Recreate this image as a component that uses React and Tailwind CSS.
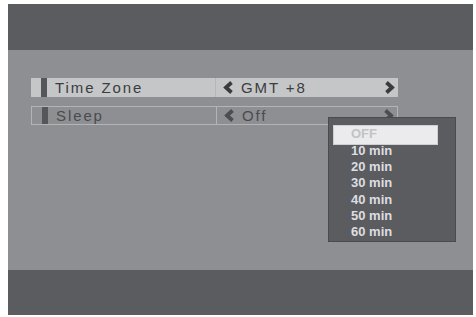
import React from "react";

// chevrons drawn as thick angle strokes, like the OSD arrows
const Chevron = ({ dir = "left", color = "#3a3b3d" }) => (
  <svg width="10" height="13" viewBox="0 0 10 13" className="shrink-0">
    <polyline
      points={dir === "left" ? "8.5,1.5 3,6.5 8.5,11.5" : "1.5,1.5 7,6.5 1.5,11.5"}
      fill="none"
      stroke={color}
      strokeWidth="3.8"
      strokeLinejoin="miter"
    />
  </svg>
);

const SLEEP_OPTIONS = ["10 min", "20 min", "30 min", "40 min", "50 min", "60 min"];

const SettingRow = ({ label, value, active }) => {
  const text = active ? "text-[#3c3d3f]" : "text-[#4a4b4e]";
  const chev = active ? "#3a3b3d" : "#4c4d50";
  return (
    <div
      className={`flex h-[19px] w-[367px] items-center ${
        active ? "bg-[#c5c6c8]" : "border border-[#b3b4b6] bg-[#8e8f92]"
      }`}
    >
      <div className="ml-[10px] h-full w-[6px] bg-[#55565a]" />
      <div className={`ml-[8px] w-[160px] text-[15px] leading-none tracking-[1.9px] ${text}`}>
        {label}
      </div>
      <div
        className={`flex h-full flex-1 items-center border-l ${
          active ? "border-[#b6b7b9]" : "border-[#b3b4b6]"
        } pl-[7px] pr-[3px]`}
      >
        <Chevron dir="left" color={chev} />
        <span className={`ml-[8px] flex-1 text-[15px] leading-none tracking-[1.9px] ${text}`}>
          {value}
        </span>
        <Chevron dir="right" color={chev} />
      </div>
    </div>
  );
};

export default function App() {
  return (
    <div
      className="relative h-[317px] w-[476px] bg-white pl-[8px] pt-[4px]"
      style={{ fontFamily: '"Liberation Sans", Arial, sans-serif' }}
    >
      <div className="flex h-[311px] w-[465px] flex-col">
        <div className="h-[46px] bg-[#5b5c5f]" />
        <div className="flex flex-1 flex-col gap-[9px] bg-[#8e8f92] pl-[23px] pt-[28px]">
          <SettingRow label="Time Zone" value="GMT +8" active />
          <SettingRow label="Sleep" value="Off" />
        </div>
        <div className="h-[45px] bg-[#5b5c5f]" />
      </div>

      {/* sleep dropdown */}
      <div className="absolute left-[328px] top-[117px] h-[125px] w-[128px] border border-[#4a4b4e] bg-[#5b5c5f]">
        <div className="absolute left-[4px] top-[7px] h-[20px] w-[105px] border border-[#d0d0d2] bg-[#ebebed]" />
        <div className="relative pl-[22px] pt-[8px] text-[13px] font-bold">
          <div className="flex h-[16.33px] items-center text-[#c2c3c5]">OFF</div>
          {SLEEP_OPTIONS.map((opt) => (
            <div key={opt} className="flex h-[16.33px] items-center text-[#dedee0]">
              {opt}
            </div>
          ))}
        </div>
      </div>
    </div>
  );
}
